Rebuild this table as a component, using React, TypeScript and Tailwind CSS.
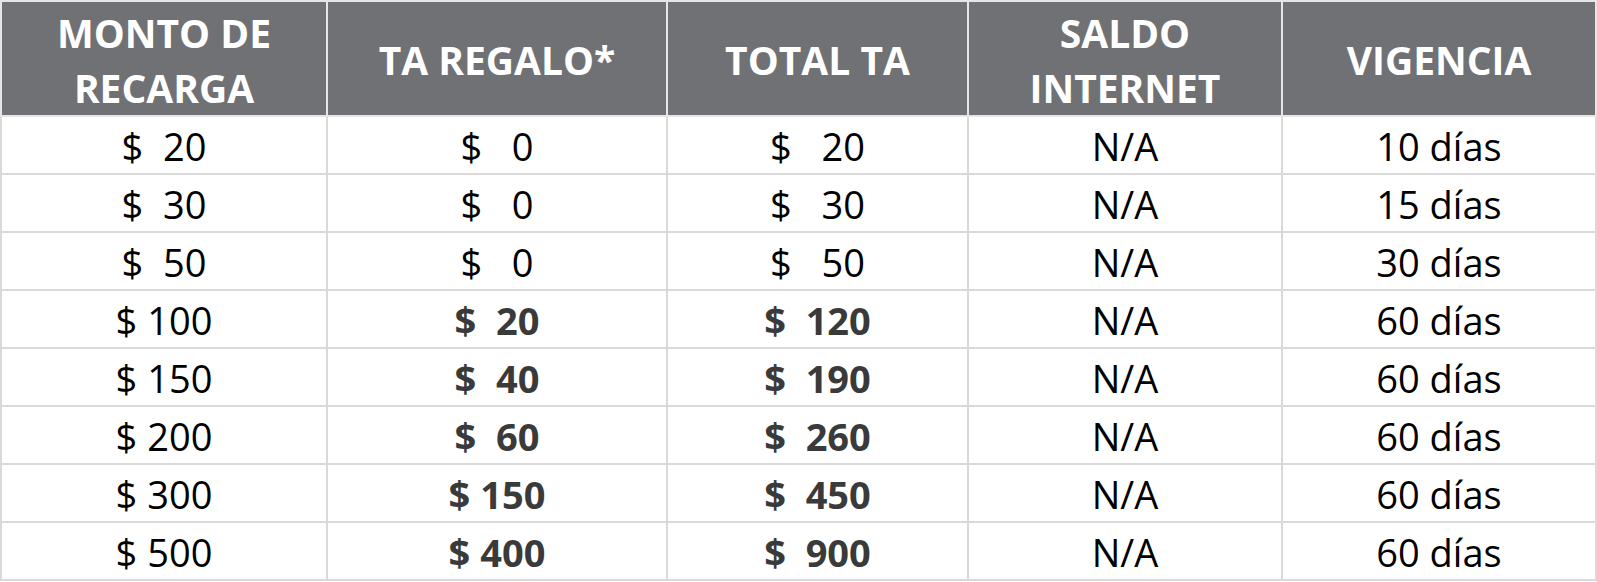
import React from "react";

const rows: [string, string, string, string, string, boolean][] = [
  ["$  20", "$   0", "$   20", "N/A", "10 días", false],
  ["$  30", "$   0", "$   30", "N/A", "15 días", false],
  ["$  50", "$   0", "$   50", "N/A", "30 días", false],
  ["$ 100", "$  20", "$  120", "N/A", "60 días", true],
  ["$ 150", "$  40", "$  190", "N/A", "60 días", true],
  ["$ 200", "$  60", "$  260", "N/A", "60 días", true],
  ["$ 300", "$ 150", "$  450", "N/A", "60 días", true],
  ["$ 500", "$ 400", "$  900", "N/A", "60 días", true],
];

const headers = [
  ["MONTO DE", "RECARGA"],
  ["TA REGALO*"],
  ["TOTAL TA"],
  ["SALDO", "INTERNET"],
  ["VIGENCIA"],
];

const widths = ["w-[326px]", "w-[340px]", "w-[301px]", "w-[314px]", "w-[314px]"];

export default function App() {
  return (
    <div className="w-[1597px] h-[582px] bg-white" style={{ fontFamily: '"Open Sans", "Noto Sans", sans-serif' }}>
      <table className="table-fixed border-collapse w-[1596px]">
        <colgroup>
          {widths.map((w, i) => (
            <col key={i} className={w} />
          ))}
        </colgroup>
        <thead>
          <tr className="h-[115px]">
            {headers.map((h, i) => (
              <th
                key={i}
                className="bg-[#707175] text-white font-bold text-[39px] leading-[55px] text-center align-middle border-2 border-[#e6e6e6] p-0 pt-[2px]"
              >
                {h.map((l, j) => (
                  <div key={j}>{l}</div>
                ))}
              </th>
            ))}
          </tr>
        </thead>
        <tbody>
          {rows.map((r, i) => (
            <tr key={i} className="h-[58px]">
              {r.slice(0, 5).map((c, j) => {
                const bold = r[5] && (j === 1 || j === 2);
                return (
                  <td
                    key={j}
                    className={`border-2 border-[#d9d9d9] text-center align-middle p-0 pt-[3px] text-[38px] leading-[53px] whitespace-pre ${
                      bold ? "font-bold text-[#3a3a3a]" : "text-black"
                    }`}
                  >
                    {c as string}
                  </td>
                );
              })}
            </tr>
          ))}
        </tbody>
      </table>
    </div>
  );
}
